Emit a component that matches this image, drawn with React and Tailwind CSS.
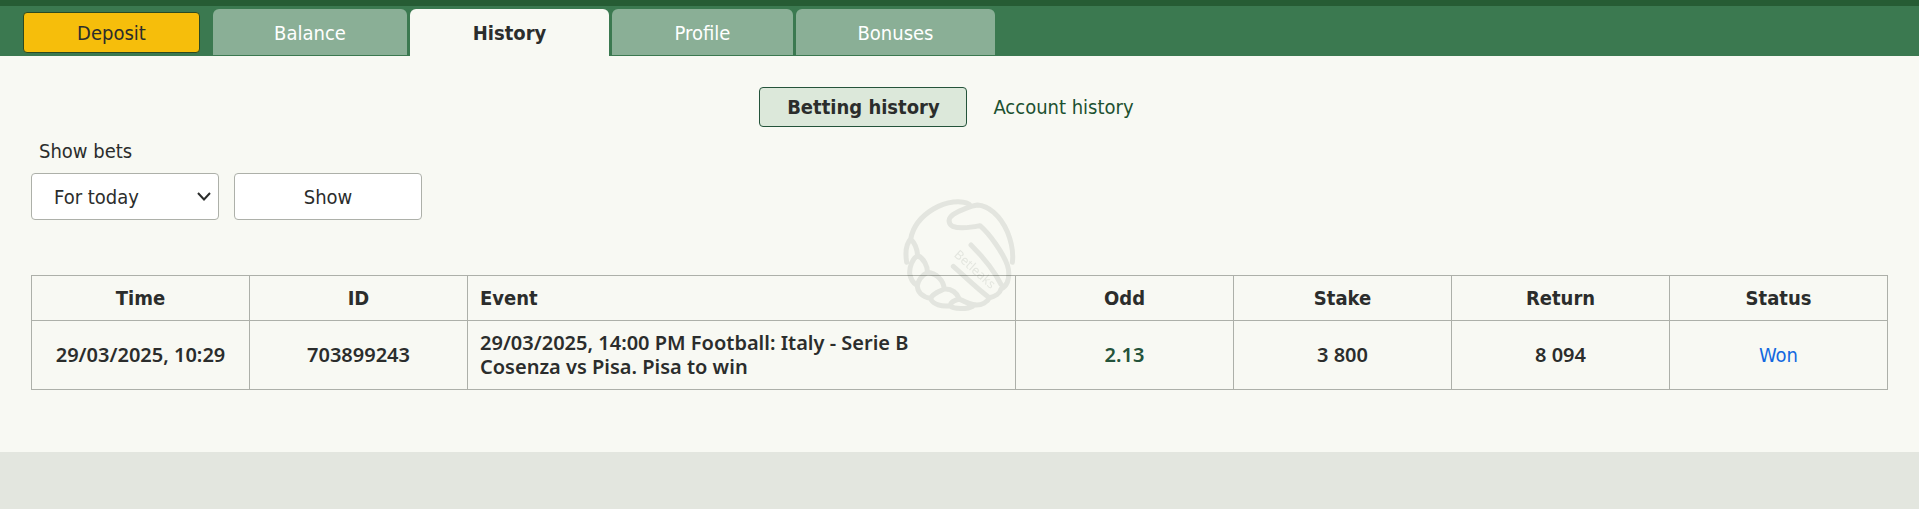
import React, { useState } from 'react';

const TABS = [
  { id: 'balance', label: 'Balance', width: 'w-[194px]' },
  { id: 'history', label: 'History', width: 'w-[199px]' },
  { id: 'profile', label: 'Profile', width: 'w-[181px]' },
  { id: 'bonuses', label: 'Bonuses', width: 'w-[199px]' },
];

const BETS = [
  {
    id: '703899243',
    time: '29/03/2025, 10:29',
    event: '29/03/2025, 14:00 PM Football: Italy - Serie B',
    pick: 'Cosenza vs Pisa. Pisa to win',
    odd: '2.13',
    stake: '3 800',
    payout: '8 094',
    status: 'Won',
  },
];

const cell = 'border border-[#adb0a9] px-3';
const strongCell = "border border-[#adb0a9] px-3 font-semibold font-['Noto_Sans',sans-serif]";

// Handshake badge in the middle of the window
const Watermark = () => (
  <div className="fixed inset-0 flex items-center justify-center pointer-events-none">
    <svg viewBox="0 0 360 360" className="w-[120px] opacity-[0.09]" fill="none" stroke="#1c2a1c" strokeWidth="15" strokeLinecap="round" strokeLinejoin="round">
      <path d="M208 28C185 15 140 18 100 42C60 66 38 100 32 132C20 145 15 170 20 202M32 132C45 145 52 165 53 182C38 190 28 215 29 235C32 255 40 265 52 272M53 182C72 190 83 215 82 232C68 240 55 255 52 272C52 290 65 305 92 310M82 232C110 236 130 255 133 282C115 290 95 298 92 312C100 328 125 336 150 332M133 282C155 280 172 295 178 312C165 315 152 322 150 332C160 344 205 342 218 334M337 202C340 180 338 150 322 110C300 60 265 32 232 30C215 32 180 45 160 58C145 68 142 85 158 94C180 102 210 98 240 92C270 118 310 175 322 210C328 228 328 245 322 262C316 276 308 280 303 282C300 295 285 305 268 308C262 322 245 330 230 330C205 328 190 318 178 312M213 150C245 182 280 222 303 268M160 214C190 240 230 280 268 308" />
      <text x="0" y="0" transform="translate(160 182) rotate(42)" fontSize="38" fill="#1c2a1c" stroke="none" fontFamily="Noto Sans, sans-serif">Betleaks</text>
    </svg>
  </div>
);

const App = () => {
  const [tab, setTab] = useState('history');
  const [period, setPeriod] = useState('today');

  return (
    <div className="min-h-screen bg-[#e3e6df] text-[#2b2d2c] text-xl leading-6 font-['DejaVu_Sans_Condensed','Noto_Sans',sans-serif]">
      {/* Top bar */}
      <header className="flex items-start h-14 border-t-6 border-[#265c34] bg-[#3b7950] pl-[23px]">
        <button className="mt-[6px] w-[177px] h-[41px] rounded border border-[#2c4a20] bg-[#f6be0b]">Deposit</button>
        <nav className="flex gap-[3px] ml-[13px] pt-[3px]">
          {TABS.map(t => (
            <button
              key={t.id}
              onClick={() => setTab(t.id)}
              className={`${t.width} rounded-t-md ${tab === t.id ? 'h-[47px] bg-[#f8f9f3] font-bold' : 'h-[46px] pt-px bg-[#8aaf96] text-white'}`}
            >
              {t.label}
            </button>
          ))}
        </nav>
      </header>

      <main className="bg-[#f8f9f3] px-[31px] pt-[31px] pb-[62px]">
        <div className="flex justify-center">
          <button className="w-[208px] h-10 rounded border border-[#24533a] bg-[#dce8da] font-bold">Betting history</button>
          <a href="#account" className="px-[26px] py-2 text-[#1d5130]">Account history</a>
        </div>

        {/* Filter */}
        <label htmlFor="period" className="block w-fit mt-3 ml-2">Show bets</label>
        <div className="flex gap-[15px] mt-[10px]">
          <div className="relative">
            <select
              id="period"
              value={period}
              onChange={(e) => setPeriod(e.target.value)}
              className="appearance-none block w-[188px] h-[47px] pl-[22px] rounded border border-[#adb0a9] bg-white"
            >
              <option value="today">For today</option>
              <option value="week">For a week</option>
            </select>
            <svg viewBox="0 0 14 9" className="absolute right-2 top-[19px] w-[14px] pointer-events-none" fill="none" stroke="#2b2d2c" strokeWidth="2">
              <path d="M1 1L7 7.5L13 1" />
            </svg>
          </div>
          <button className="w-[188px] h-[47px] rounded border border-[#adb0a9] bg-white">Show</button>
        </div>

        <table className="table-fixed w-full mt-[55px] border-collapse text-center">
          <thead>
            <tr className="h-[45px]">
              <th className={`${cell} w-[218px]`}>Time</th>
              <th className={`${cell} w-[218px]`}>ID</th>
              <th className={`${cell} text-left`}>Event</th>
              <th className={`${cell} w-[218px]`}>Odd</th>
              <th className={`${cell} w-[218px]`}>Stake</th>
              <th className={`${cell} w-[218px]`}>Return</th>
              <th className={`${cell} w-[218px]`}>Status</th>
            </tr>
          </thead>
          <tbody>
            {BETS.map(bet => (
              <tr key={bet.id} className="h-[69px]">
                <td className={strongCell}>{bet.time}</td>
                <td className={strongCell}>{bet.id}</td>
                <td className={`${strongCell} text-left`}>
                  <div>{bet.event}</div>
                  <div>{bet.pick}</div>
                </td>
                <td className={`${strongCell} text-[#24533a]`}>{bet.odd}</td>
                <td className={strongCell}>{bet.stake}</td>
                <td className={strongCell}>{bet.payout}</td>
                <td className={`${cell} text-[#1268e0]`}>{bet.status}</td>
              </tr>
            ))}
          </tbody>
        </table>
      </main>

      <Watermark />
    </div>
  );
};

export default App;
